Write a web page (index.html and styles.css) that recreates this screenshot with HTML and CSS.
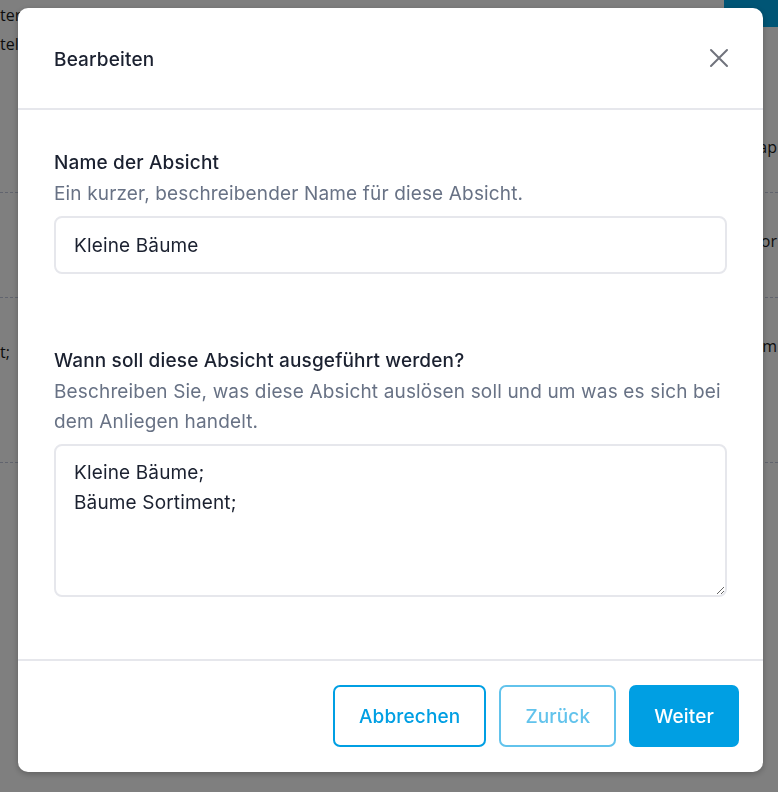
FILE: index.html
```html
<!DOCTYPE html>
<html lang="de">
<head>
<meta charset="utf-8">
<title>Bearbeiten</title>
<link rel="stylesheet" href="styles.css">
</head>
<body>
<div class="page">
  <div class="row row-head">
    <div class="cell left">
      <span class="frag">ter</span>
      <span class="frag">tel</span>
    </div>
    <div class="cell heads">
      <span class="h">Antwort f</span>
      <span class="h">Auslösungsb.</span>
      <span class="h">Weiterleitung</span>
      <span class="h">Telefon</span>
      <span class="h">Reaktion</span>
    </div>
    <div class="cell right">
      <span class="add-btn"></span>
    </div>
  </div>
  <div class="row row-a">
    <div class="cell left"></div>
    <div class="cell heads"></div>
    <div class="cell right"></div>
  </div>
  <div class="row row-b">
    <div class="cell left"><span class="frag frag-t">t;</span></div>
    <div class="cell heads"></div>
    <div class="cell right"></div>
  </div>
  <div class="row row-c"></div>
  <div class="edge-col">
    <span class="frag edge-ap">Knap</span>
    <span class="frag edge-or">Sor</span>
    <span class="frag edge-m">Baum</span>
  </div>
</div>

<div class="overlay">
  <div class="modal">
    <div class="modal-header">
      <h2 class="modal-title">Bearbeiten</h2>
      <button class="close-btn" aria-label="Schließen">
        <svg width="20" height="20" viewBox="0 0 20 20"><path d="M2 2 L18 18 M18 2 L2 18" stroke="#70737c" stroke-width="2" stroke-linecap="round" fill="none"/></svg>
      </button>
    </div>
    <div class="modal-body">
      <div class="field">
        <label class="field-label">Name der Absicht</label>
        <div class="field-help">Ein kurzer, beschreibender Name für diese Absicht.</div>
        <input class="text-input" type="text" value="Kleine Bäume">
      </div>
      <div class="field field-second">
        <label class="field-label">Wann soll diese Absicht ausgeführt werden?</label>
        <div class="field-help">Beschreiben Sie, was diese Absicht auslösen soll und um was es sich bei dem Anliegen handelt.</div>
        <textarea class="text-area">Kleine Bäume;
Bäume Sortiment;</textarea>
      </div>
    </div>
    <div class="modal-footer">
      <button class="btn btn-outline">Abbrechen</button>
      <button class="btn btn-outline btn-disabled">Zurück</button>
      <button class="btn btn-primary">Weiter</button>
    </div>
  </div>
</div>
</body>
</html>
```

FILE: styles.css
```css
* { box-sizing: border-box; }

html, body {
  margin: 0;
  padding: 0;
  height: 100%;
  overflow: hidden;
}

body {
  background: #ffffff;
  font-family: "Inter", "Open Sans", sans-serif;
  color: #1b2130;
}

/* background page (dimmed behind the dialog) */
.page {
  position: relative;
  display: flex;
  flex-direction: column;
  font-family: "Open Sans", sans-serif;
  font-size: 16px;
  color: #1a1a1a;
}

.row {
  display: flex;
  border-bottom: 1px dashed #c3c9dc;
}

.row-head { height: 193px; }
.row-a { height: 105px; }
.row-b { height: 165px; }
.row-c { height: 340px; border-bottom: 0; }

.cell { flex: none; }

.left {
  width: 30px;
  display: flex;
  flex-direction: column;
}

.heads {
  width: 735px;
  display: flex;
  align-items: flex-start;
  gap: 40px;
  padding: 1px 0 0 30px;
  overflow: hidden;
}

.right {
  flex: 1;
  display: flex;
  flex-direction: column;
  align-items: flex-start;
}

.frag { line-height: 29px; white-space: nowrap; }
.row-head .left { padding-top: 1px; }

.h { line-height: 29px; white-space: nowrap; }

.add-btn {
  display: block;
  width: 54px;
  height: 27px;
  margin-left: -41px;
  background: #00aaea;
}

.frag-t { margin-top: 40px; }

/* texts of the last table column, peeking out at the right edge */
.edge-col {
  position: absolute;
  top: 0;
  right: 1px;
  display: flex;
  flex-direction: column;
  align-items: flex-end;
}

.edge-ap { margin-top: 133px; }
.edge-or { margin-top: 65px; }
.edge-m { margin-top: 76px; }

/* overlay and modal */
.overlay {
  position: fixed;
  inset: 0;
  background: rgba(0, 0, 0, 0.5);
  padding: 8px 15px 0 18px;
}

.modal {
  width: 745px;
  background: #ffffff;
  border-radius: 10px;
  box-shadow: 0 2px 6px rgba(0, 0, 0, 0.25);
  display: flex;
  flex-direction: column;
  font-size: 19px;
  letter-spacing: 0.15px;
}

.modal-header {
  height: 102px;
  padding: 0 34px 0 36px;
  display: flex;
  align-items: center;
  justify-content: space-between;
  border-bottom: 2px solid #e6e7ec;
}

.modal-title {
  margin: 0;
  font-size: 19px;
  font-weight: 500;
  color: #1b2130;
  padding-top: 2px;
}

.close-btn {
  border: 0;
  background: none;
  padding: 0;
  width: 20px;
  height: 20px;
  display: flex;
}

.modal-body {
  padding: 38px 36px 62px 36px;
  display: flex;
  flex-direction: column;
}

.field { display: flex; flex-direction: column; }
.field-second { margin-top: 72px; }

.field-label {
  font-size: 19px;
  font-weight: 500;
  line-height: 30px;
  color: #1b2130;
  margin-bottom: 1px;
}

.field-help {
  font-size: 19px;
  line-height: 30px;
  color: #687285;
  margin-bottom: 7px;
}

.text-input,
.text-area {
  font-family: inherit;
  font-size: 19px;
  letter-spacing: 0.15px;
  color: #1b2130;
  border: 2px solid #e6e7ec;
  border-radius: 8px;
  background: #fff;
  outline: none;
  width: 100%;
  display: block;
}

.text-input {
  height: 58px;
  padding: 0 18px;
}

.text-area {
  height: 153px;
  padding: 12px 18px;
  line-height: 30px;
  resize: vertical;
}

.modal-footer {
  border-top: 2px solid #e6e7ec;
  padding: 24px 24px 25px 24px;
  display: flex;
  justify-content: flex-end;
  gap: 13px;
}

.btn {
  font-family: inherit;
  font-size: 19px;
  letter-spacing: 0.15px;
  font-weight: 500;
  height: 62px;
  border-radius: 7px;
  padding: 0 24px;
  cursor: pointer;
}

.btn-outline {
  background: #fff;
  border: 2px solid #009fe3;
  color: #009fe3;
}

.btn-disabled {
  border-color: #62c3ec;
  color: #62c3ec;
}

.btn-primary {
  background: #009fe3;
  border: 2px solid #009fe3;
  color: #fff;
  padding: 0 23px;
}
```
